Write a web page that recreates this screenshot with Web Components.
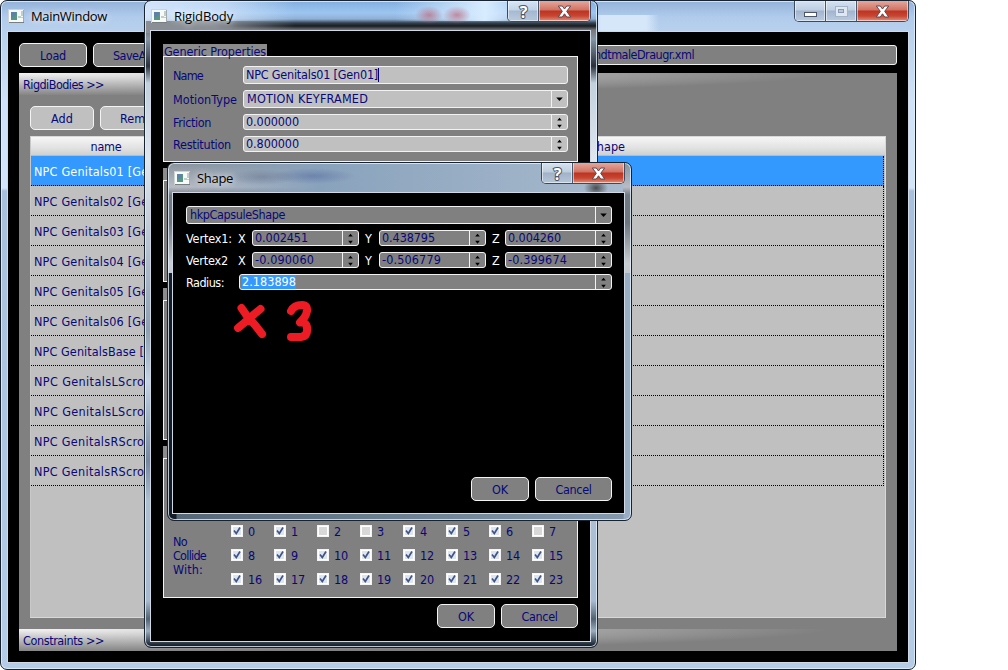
<!DOCTYPE html>
<html lang="en"><head><meta charset="utf-8"><title>MainWindow</title>
<style>
html,body{margin:0;background:#fff;height:670px;overflow:hidden}
body{position:relative;font:12.5px/14px "DejaVu Sans Condensed","DejaVu Sans",sans-serif;color:#080878}
aero-window{position:absolute}
#main{left:0;top:0;width:916px;height:670px;--th:31px;--pl:7px;--pr:7px;--pb:7px;
--glass:linear-gradient(90deg,transparent 0 590px,#d7e7fa 600px 645px,transparent 658px) 0 14px/100% 18px no-repeat,linear-gradient(180deg,#93b2d9 0,#b0cbec 16px,#b9d1ec 31px,#cfe2f7 100px,#d3e5f8 187px,#a9c0dc 190px,#b5cce7 100%)}
#rigid{left:144px;top:0;width:454px;height:648px;--th:30px;--pl:6px;--pr:7px;--pb:6px;
--glass:radial-gradient(ellipse 14px 9px at 284px 14px,#b96174aa,transparent),radial-gradient(ellipse 14px 9px at 312px 14px,#b96174aa,transparent),linear-gradient(90deg,#e3efffcc 0,#d8e8fbaa 80px,transparent 150px,transparent 250px,#d8ecff 340px,transparent 400px) 0 0/100% 20px no-repeat,linear-gradient(90deg,#8a8f96 0,#8a8f96 70px,transparent 150px) 0 20px/150px 12px no-repeat,linear-gradient(180deg,#82afe0 0,#9dc5f0 12px,#8eb0d5 18px,#34414f 22px,#181c22 25px,#777 29px,#8696a4 38px,#293039 65px,#c2d0dd 82px,#dfe7ef 160px,#8fa0b2 330px,#c5d5e6 380px,#74879d 460px,#afc0d2 500px,#a6bad0 600px,#536272 618px,#9bacbe 630px,#141d29 645px)}
#shape{left:167px;top:162px;width:465px;height:359px;--th:30px;--pl:5px;--pr:7px;--pb:7px;
--glass:radial-gradient(ellipse 34px 8px at 94px 14px,#5c668166,transparent),radial-gradient(ellipse 42px 8px at 145px 13px,#5b70a299,transparent),radial-gradient(ellipse 12px 9px at 428px 25px,#333c,transparent),linear-gradient(90deg,transparent 10px,#89a2bc 150px,#a8bacd 455px) 0 0/calc(100% - 8px) 31px no-repeat,linear-gradient(90deg,#151d26 8px,#566878 9px,#8499ae 455px,#99aec5 456px) 0 110px/100% 100% no-repeat,linear-gradient(180deg,#88929c 0,#b9bcc4 24px,#727a82 32px,#70767e 60px,#c9ccd0 100px,#52667d 100%)}
</style></head><body>
<aero-window id="main" caption="MainWindow" cw="76" buttons="min max close"><main-form></main-form></aero-window>
<aero-window id="rigid" caption="RigidBody" cw="59" buttons="help close"><rigid-form></rigid-form></aero-window>
<aero-window id="shape" caption="Shape" cw="36" buttons="help close"><shape-form></shape-form></aero-window>
<script>
const fitted=[];
function define(name,render){
  customElements.define(name,class extends HTMLElement{
    connectedCallback(){
      if(this.shadowRoot)return;
      this.attachShadow({mode:'open'}).innerHTML=render(this,(k,d='')=>this.hasAttribute(k)?this.getAttribute(k):d);
      if(name==='ui-text'&&this.hasAttribute('w'))fitted.push(this);
    }
  });
}
define('ui-text',()=>`<style>:host{display:inline-block;white-space:pre}</style><slot></slot>`);

define('caption-button',(e,a)=>{
  const k=a('kind');
  const g={
    min:'<rect x="9.5" y="11.5" width="12" height="4" fill="#fff" stroke="#4c5668"/>',
    max:'<g fill="none"><rect x="9.5" y="5.5" width="12" height="10" fill="#dfe7f0" stroke="#a4b3c8"/><rect x="12.5" y="8.5" width="5" height="3" fill="#b9c9dc" stroke="#8899b3"/></g>',
    help:'<text x="15.5" y="16.5" text-anchor="middle" font-family="Open Sans" font-weight="700" font-size="16" fill="#fff" stroke="#4c5668" stroke-width="2" paint-order="stroke">?</text>',
    close:'<path d="M20 5.500h4l2.200 3 2.200-3h4l-4 5.300 4 5.700h-4l-2.200-3.200-2.200 3.200h-4l4-5.700z" fill="#fff" stroke="#68464c" stroke-width="1"/>'}[k];
  const w=k==='close'?51:30;
  return `<style>:host{display:block;width:${w}px;height:20px;border-left:1px solid #4a566a;box-shadow:inset 1px 0 #fff8,inset -1px -1px #fff8;background:${k==='close'?'linear-gradient(#e5a79b,#d07364 9px,#bd3421 10px,#c84632 15px,#df9181)':'linear-gradient(#e4edf7cc,#c5d3e3cc 9px,#a1b1c7cc 10px,#bccbddcc)'}}:host(:first-child){border-left:0}svg{display:block}</style><svg width="${w}" height="20">${k==='close'?'<g transform="translate(-.7 -.5)">'+g+'</g>':g}</svg>`;
});

define('aero-window',(e,a)=>`<style>
:host{display:flex;flex-direction:column;box-sizing:border-box;border:1px solid #182332;border-radius:7px;padding:0 var(--pr) var(--pb) var(--pl);background:var(--glass);box-shadow:inset 0 0 0 1px #e4f0fbcc;}
header{height:var(--th);flex:none;display:flex;align-items:flex-start;color:#000;font:13px/18px "Open Sans","Noto Sans",sans-serif}
svg.i{margin:8px 7px 0 0;flex:none}
.t{margin-top:6px;text-shadow:0 0 6px #fffc,0 0 8px #fff8}
nav{margin-left:auto;display:flex;border:1px solid #3d4a5e;border-top:0;border-radius:0 0 5px 5px;overflow:hidden;margin-right:-1px}
.client{flex:1;min-height:0;background:#000;box-shadow:0 0 0 1px #cfdae6;display:grid;grid-template-columns:minmax(0,1fr)}
:host(#shape) svg.i{margin-left:1px}
</style><header><svg class="i" width="16" height="14"><rect x=".5" y=".5" width="15" height="13" fill="#f8faf7" stroke="#cdd5d4"/><path d="M1 13.500h15V1" stroke="#777f83" fill="none"/><rect x="3" y="3" width="6" height="8" fill="#569782"/><path d="M3 3h5v3L3 9z" fill="#5c83a7"/><path d="M10 8h3M14 2v5M14 8v1" stroke="#8ba2a0"/></svg><ui-text class="t" w="${a('cw')}">${a('caption')}</ui-text><nav>${a('buttons').split(' ').map(b=>`<caption-button kind="${b}"></caption-button>`).join('')}</nav></header><div class="client"><slot></slot></div>`);

define('push-button',()=>`<style>:host{display:flex;align-items:center;justify-content:center;box-sizing:border-box;height:24px;border:1px solid #f4f4f4;border-radius:5px;background:var(--bg,#808080);flex:none;overflow:hidden;padding-top:1px}</style><slot></slot>`);

define('edit-field',(e,a)=>{
  const k=a('kind');
  const arrows=k==='spin'?'<path d="M5.500 7.500h5L8 4.500zM5.500 12h5L8 15z"/>':'<path d="M4.500 7.500h7L8 11z"/>';
  return `<style>:host{display:flex;box-sizing:border-box;height:${k==='spin'?16:18}px;border:1px solid #f2f2f2;border-radius:3px;background:var(--bg,#808080);min-width:0;overflow:hidden}
  .v{flex:1;min-width:0;display:flex;align-items:center;padding-left:${a('pad','2')}px}
  .b{flex:none;width:15px;border-left:1px solid #f2f2f2;display:flex;align-items:center}svg{display:block;fill:#000}</style><div class="v"><slot></slot></div>${k?`<div class="b"><svg width="16" height="18" viewBox="0 0 16 18" style="margin:-1px 0">${arrows}</svg></div>`:''}`;
});

define('check-item',(e,a)=>`<style>:host{display:flex;align-items:center;gap:5px;width:43px;height:14px}svg{flex:none}ui-text{padding-top:1px}</style><svg width="12" height="12"><rect x=".5" y=".5" width="11" height="11" fill="#fff" stroke="#f4f4f4"/><rect x="2" y="2" width="8" height="8" fill="${a('on')?'#dfe5ee':'#d8d8d8'}"/>${a('on')?'<path d="M3 5.500l2.300 3L9 2.500" fill="none" stroke="#3f5587" stroke-width="1.700"/>':''}</svg><ui-text ${a('n').length>1?'w="14"':'w="7"'}>${a('n')}</ui-text>`);

define('section-bar',()=>`<style>:host{display:flex;align-items:center;height:22px;box-sizing:border-box;padding:1px 4px 0;background:radial-gradient(ellipse 810px 23px at 0 0,#f4f4f4 0,#c4c4c4 40%,#808080 100%)}</style><slot></slot>`);

define('table-row',()=>`<style>:host{display:flex;align-items:center;padding:2px 0 0 3px;margin-right:1px;border-bottom:1px dotted #000;border-right:1px dotted #000;box-sizing:content-box;height:27px}:host([selected]){background:#3399ff;color:#fff}</style><slot></slot>`);

define('data-table',()=>`<style>:host{display:flex;flex-direction:column;box-sizing:border-box;background:#c0c0c0;border:1px solid #d8d8d8;border-left-color:#c8c8c8}
.h{flex:none;height:18px;background:linear-gradient(#f6f6f6,#e2e2e2 60%,#d0d0d0);display:grid;grid-template-columns:150px 410px 1fr;align-items:center;border-bottom:1px solid #bbb}.h ui-text{justify-self:center;padding-top:2px}.h .s{justify-self:start}</style><div class="h"><ui-text w="31">name</ui-text><span></span><ui-text class="s" w="34">shape</ui-text></div><slot></slot>`);

define('main-form',()=>{
  const rows=[['NPC Genitals01 [Gen01]',141],['NPC Genitals02 [Gen02]',141],['NPC Genitals03 [Gen03]',141],['NPC Genitals04 [Gen04]',141],['NPC Genitals05 [Gen05]',141],['NPC Genitals06 [Gen06]',141],['NPC GenitalsBase [',110],['NPC GenitalsLScrot',115],['NPC GenitalsLScrot',115],['NPC GenitalsRScrot',115],['NPC GenitalsRScrot',115]];
  return `<style>:host{display:flex;flex-direction:column;padding:11px;box-sizing:border-box}
  .bar{display:flex;gap:6px;height:24px;align-items:center}.bar edit-field{flex:1;height:20px;margin-left:326px}
  .panel{margin-top:6px;height:578px;background:#808080;display:flex;flex-direction:column}
  .tools{display:flex;gap:6px;padding:11px 11px 6px;--bg:#c0c0c0}data-table{margin:0 11px;height:482px}section-bar{flex:none}section-bar.c{margin-top:11px}
  </style><div class="bar"><push-button style="width:68px"><ui-text w="26">Load</ui-text></push-button><push-button style="width:78px"><ui-text w="38">SaveAs</ui-text></push-button><edit-field pad="94" style="margin-left:322px"><ui-text w="100">ndtmaleDraugr.xml</ui-text></edit-field></div>
  <div class="panel"><section-bar><ui-text w="81">RigdiBodies &gt;&gt;</ui-text></section-bar>
  <div class="tools"><push-button style="width:64px"><ui-text w="22">Add</ui-text></push-button><push-button style="width:86px"><ui-text w="46">Remove</ui-text></push-button></div>
  <data-table>${rows.map((r,i)=>`<table-row ${i?'':'selected'}><ui-text w="${r[1]}">${r[0]}</ui-text></table-row>`).join('')}</data-table>
  <section-bar class="c"><ui-text w="81">Constraints &gt;&gt;</ui-text></section-bar></div>`;
});

define('group-box',(e,a)=>`<style>:host{display:block}.l{display:block;width:104px;height:13px;background:#8c8c8c;box-sizing:border-box;padding-left:1px}.l ui-text{line-height:16px}.b{box-sizing:border-box;border:1px solid #f4f4f4;background:#808080;height:${a('h')}px;margin-top:-1px}</style><div class="l">${a('label')?`<ui-text w="102">${a('label')}</ui-text>`:''}</div><div class="b"><slot></slot></div>`);

define('rigid-form',()=>{
  const off=[2,3,7];
  return `<style>:host{display:flex;flex-direction:column;padding:13px 12px 12px;box-sizing:border-box;align-items:stretch}
  .f{display:grid;grid-template-columns:70px 325px;grid-template-rows:18px 18px 16px 16px;row-gap:6px;padding:9px;align-items:center;--bg:#c0c0c0}
  .f>ui-text{padding-top:1px;justify-self:start}
  .caret{width:1px;height:14px;background:#00007a}
  .c{display:grid;grid-template-columns:58px 344px;padding:65px 0 0 9px;align-items:start}.grid{display:grid;grid-template-columns:repeat(8,43px);row-gap:10px}
  .nc{padding-top:11px}.nc ui-text{display:block}
  .actions{display:flex;gap:6px;justify-content:flex-end;margin-top:6px}
  .m{margin-top:6px}</style>
  <group-box label="Generic Properties" h="106"><div class="f">
  <ui-text w="30">Name</ui-text><edit-field><ui-text w="132">NPC Genitals01 [Gen01]</ui-text><span class="caret"></span></edit-field>
  <ui-text w="64">MotionType</ui-text><edit-field kind="combo" pad="3"><ui-text w="121">MOTION KEYFRAMED</ui-text></edit-field>
  <ui-text w="38">Friction</ui-text><edit-field kind="spin"><ui-text w="53">0.000000</ui-text></edit-field>
  <ui-text w="58">Restitution</ui-text><edit-field kind="spin"><ui-text w="53">0.800000</ui-text></edit-field></div></group-box>
  <group-box class="m" h="102"></group-box><group-box class="m" h="140"></group-box>
  <group-box class="m" h="140"><div class="c"><div class="nc"><ui-text w="14">No</ui-text><ui-text w="33">Collide</ui-text><ui-text w="30">With:</ui-text></div><div class="grid">${Array.from({length:24},(_,n)=>`<check-item n="${n}" ${off.includes(n)?'':'on="1"'}></check-item>`).join('')}</div></div></group-box>
  <div class="actions"><push-button style="width:58px"><ui-text w="16">OK</ui-text></push-button><push-button style="width:77px"><ui-text w="36">Cancel</ui-text></push-button></div>`;
});

define('shape-form',()=>{
  const spin=v=>`<edit-field kind="spin"><ui-text w="${v[0]==='-'?59:53}">${v}</ui-text></edit-field>`;
  const row=(l,w,v)=>`<div class="v"><ui-text w="${w}">${l}</ui-text><ui-text>X</ui-text>${spin(v[0])}<ui-text class="n">Y</ui-text>${spin(v[1])}<ui-text class="n">Z</ui-text>${spin(v[2])}</div>`;
  return `<style>:host{display:flex;flex-direction:column;padding:13px 12px 12px 13px;box-sizing:border-box;gap:6px}
  .v,.r{display:grid;align-items:center;color:#fff}.v{grid-template-columns:52px 14px 107px 20px 107px 19px 107px}.r{grid-template-columns:53px 373px}
  .v>ui-text,.r>ui-text{justify-self:start;padding-top:1px}.n{margin-left:6px}edit-field{color:#080878}
  .sel{background:#3399ff;color:#fff;line-height:14px}
  .ink{margin:4px 0 0 46px;display:block}
  .actions{display:flex;gap:6px;justify-content:flex-end;margin-top:auto}</style>
  <edit-field kind="combo" pad="3"><ui-text w="95">hkpCapsuleShape</ui-text></edit-field>
  ${row('Vertex1:',46,['0.002451','0.438795','0.004260'])}${row('Vertex2',42,['-0.090060','-0.506779','-0.399674'])}
  <div class="r"><ui-text w="38">Radius:</ui-text><edit-field kind="spin"><ui-text class="sel" w="54">2.183898</ui-text></edit-field></div>
  <svg class="ink" width="90" height="44" viewBox="232 300 90 44" fill="none" stroke="#ed1c24" stroke-width="8" stroke-linecap="round" stroke-linejoin="round"><path d="M241.500 308L247 316L255 325L262 334M260.500 309L252 316L244 323L238 328M291 311Q294 305 302 305Q308 305 307 311Q306 317 300 322.500Q307 322 307 328Q308 336 301 337L291 337"/></svg>
  <div class="actions"><push-button style="width:58px"><ui-text w="16">OK</ui-text></push-button><push-button style="width:77px"><ui-text w="36">Cancel</ui-text></push-button></div>`;
});

/* Spread each label over its nominal width. */
for(const t of fitted){
  const s=getComputedStyle(t),c=document.createElement('canvas').getContext('2d');
  c.font=`${s.fontSize} ${s.fontFamily}`;
  const n=t.textContent.length;
  t.style.letterSpacing=((+t.getAttribute('w')-c.measureText(t.textContent).width)/n).toFixed(3)+'px';
}
</script></body></html>
